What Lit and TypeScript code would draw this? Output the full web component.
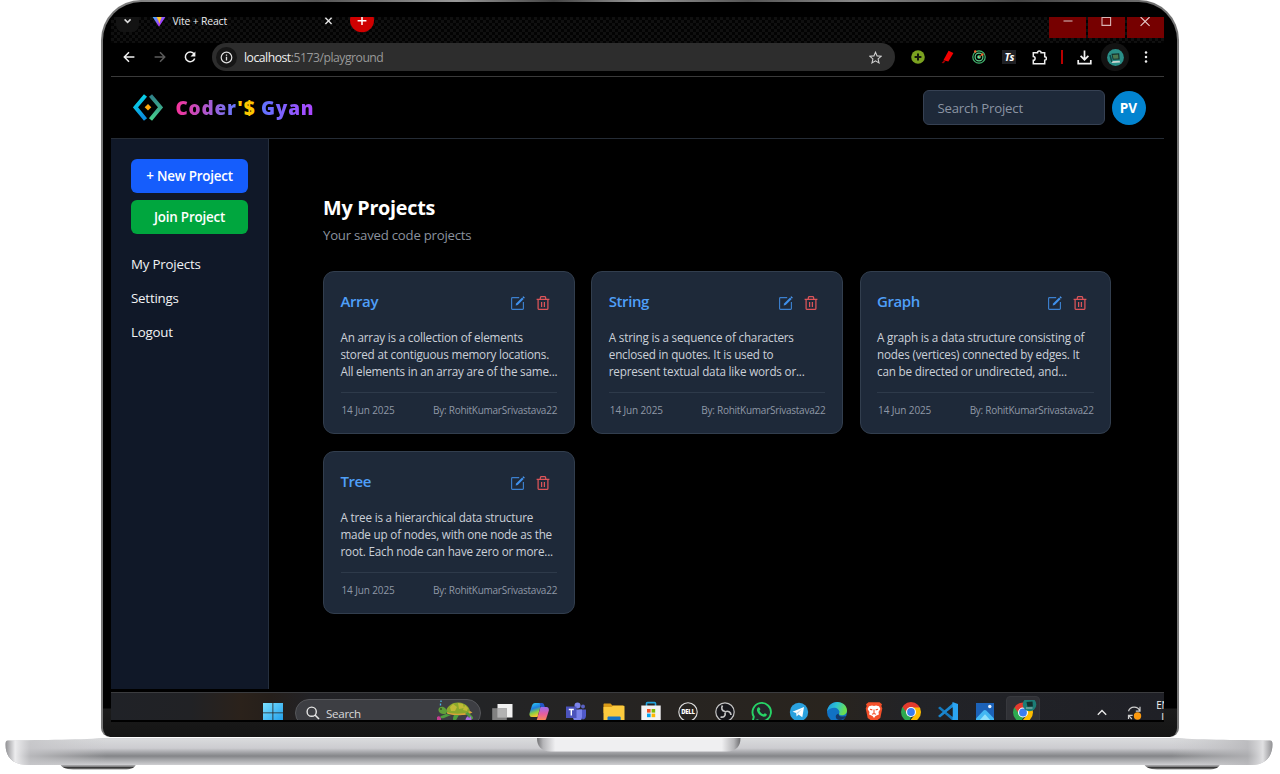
import { LitElement, html, css, svg } from "lit";
import { customElement, property } from "lit/decorators.js";

const icon = (size: number, body: unknown, box = size) =>
  html`<svg width=${size} height=${size} viewBox="0 0 ${box} ${box}" fill="none">${body}</svg>`;

interface Project {
  title: string;
  lines: string[];
  date: string;
  author: string;
}

const PROJECTS: Project[] = [
  { title: "Array", lines: ["An array is a collection of elements", "stored at contiguous memory locations.", "All elements in an array are of the same..."], date: "14 Jun 2025", author: "RohitKumarSrivastava22" },
  { title: "String", lines: ["A string is a sequence of characters", "enclosed in quotes. It is used to", "represent textual data like words or..."], date: "14 Jun 2025", author: "RohitKumarSrivastava22" },
  { title: "Graph", lines: ["A graph is a data structure consisting of", "nodes (vertices) connected by edges. It", "can be directed or undirected, and..."], date: "14 Jun 2025", author: "RohitKumarSrivastava22" },
  { title: "Tree", lines: ["A tree is a hierarchical data structure", "made up of nodes, with one node as the", "root. Each node can have zero or more..."], date: "14 Jun 2025", author: "RohitKumarSrivastava22" },
];

@customElement("project-card")
export class ProjectCard extends LitElement {
  @property({ attribute: false }) project!: Project;

  static styles = css`
    :host {
      display: block;
      box-sizing: border-box;
      height: 163px;
      padding: 16px 16.5px;
      border: 1px solid #323e4e;
      border-radius: 11px;
      background: #1e2939;
    }
    .head { display: flex; justify-content: space-between; height: 27px; }
    h3 { margin: 0; font-size: 15px; line-height: 27px; font-weight: 600; color: #4f9ff8; letter-spacing: -0.42px; }
    .actions { display: flex; gap: 11px; padding: 8px 7px 0 0; }
    .actions svg { display: block; }
    .desc { margin: 14px 0 12px; font-size: 11.7px; line-height: 17px; letter-spacing: -0.2px; color: #cbd0d8; white-space: nowrap; }
    .foot { display: flex; justify-content: space-between; padding-top: 9px; border-top: 1px solid #2e3a4a; font-size: 10px; line-height: 16px; letter-spacing: -0.26px; color: #8f98a6; white-space: nowrap; }
    .date { letter-spacing: -0.12px; padding-left: 1px; }
  `;

  render() {
    const p = this.project;
    return html`
      <div class="head">
        <h3>${p.title}</h3>
        <div class="actions">
          ${icon(14, svg`<path d="M8.2 1.6H1.4a.8.8 0 0 0-.8.8v10.2c0 .4.4.8.8.8h10.2c.4 0 .8-.4.8-.8V6" stroke="#3c80cf" stroke-width="1.15"/><path d="M4.6 9.5l.5-2.1 6-6 1.6 1.6-6 6z" fill="#3f8fea"/><path d="M11.5 1l.8-.7 1.5 1.5-.8.8z" fill="#51a2ff"/>`)}
          ${icon(14, svg`<g stroke="#dc5459" stroke-width="1.25"><path d="M.6 3.4h12.8M2.1 3.6v8.8c0 .6.4 1 1 1h7.8c.6 0 1-.4 1-1V3.6M4.3 3.2V1.9c0-.9.5-1.3 1.2-1.3h3c.7 0 1.2.4 1.2 1.3v1.3"/><path d="M5.6 6v5M8.4 6v5"/></g>`)}
        </div>
      </div>
      <div class="desc">${p.lines.map((l) => html`<div>${l}</div>`)}</div>
      <div class="foot"><span class="date">${p.date}</span><span>By: ${p.author}</span></div>
    `;
  }
}

@customElement("browser-chrome")
export class BrowserChrome extends LitElement {
  static styles = css`
    :host { display: block; color: #e8eaed; }
    svg { display: block; }
    .tabs {
      display: flex;
      height: 26px;
      overflow: hidden;
      background: repeating-conic-gradient(#101010 0 25%, #030303 0 50%) 0 0 / 6px 6px;
    }
    .chev { width: 23px; height: 15px; margin-left: 5px; border-radius: 0 0 7px 7px; background: #131313; }
    .vite { margin-left: 13px; }
    .title { width: 149px; margin-left: 6.5px; font-size: 10.4px; line-height: 9px; letter-spacing: -0.16px; white-space: nowrap; }
    .close { padding-top: 0; }
    .plus { margin-left: 14px; }
    .win { display: flex; gap: 1.5px; margin-left: auto; }
    .win span { width: 37.5px; height: 20.5px; background: #760000; }
    .bar { display: flex; align-items: center; height: 28px; padding: 0 0 5px 3px; border-bottom: 1px solid #3a3a3a; background: #000; }
    .slot { display: flex; justify-content: center; align-items: center; width: 30.5px; flex: none; }
    .slot.thin { width: 14px; }
    .slot.last { width: 30px; }
    .slot.me { width: 31px; }
    .me span { display: flex; align-items: center; justify-content: center; width: 28px; height: 28px; border-radius: 50%; background: #131313; }
    .url { display: flex; align-items: center; flex: none; box-sizing: border-box; width: 683px; height: 28px; margin: 0 7.5px 0 6.5px; padding: 0 13px 0 4px; border-radius: 14px; background: #2d2d2d; }
    .info { display: flex; align-items: center; justify-content: center; width: 21px; height: 21px; margin-right: 7px; border-radius: 50%; background: #161616; }
    .addr { flex: 1; font-size: 12.2px; letter-spacing: -0.48px; color: #999; white-space: nowrap; }
    .addr b { font-weight: 400; color: #f0f0f0; }
    .ts { font: italic 700 10.5px "Open Sans", sans-serif; width: 14px; height: 14px; line-height: 14px; text-align: center; color: #fff; background: #1f2024; letter-spacing: -0.5px; }
  `;

  render() {
    return html`
      <div class="tabs">
        <div class="chev">${icon(23, svg`<path d="M8.6 2.4l3 3 3-3" stroke="#ddd" stroke-width="1.5"/>`)}</div>
        <div class="vite">${icon(14, svg`<defs><linearGradient id="v" x1="0" y1="0" x2="1" y2="1"><stop stop-color="#41b6ff"/><stop offset=".6" stop-color="#a33cff"/><stop offset="1" stop-color="#bd34fe"/></linearGradient></defs><path d="M.6 0h12.8L7 9.8z" fill="url(#v)"/><path d="M4.6 0h5L7.2 7 6.6 4z" fill="#ffc62b"/>`)}</div>
        <div class="title">Vite + React</div>
        <div class="close">${icon(14, svg`<path d="M3.4.8l6.2 6.2M9.6.8L3.4 7" stroke="#e3e3e3" stroke-width="1.4"/>`)}</div>
        <div class="plus">${icon(24, svg`<circle cx="12" cy="3.2" r="12" fill="#cf0000"/><path d="M12-.8v8.8M7.6 3.8h8.8" stroke="#fff" stroke-width="1.5"/>`)}</div>
        <div class="win">
          <span>${icon(37, svg`<path d="M14.5 4h9" stroke="#d9c4c4" stroke-width="1"/>`)}</span>
          <span>${icon(37, svg`<path d="M14 .4h8.6v8H14z" stroke="#d9b4b4" stroke-width="1.1"/>`)}</span>
          <span>${icon(36, svg`<path d="M13.6 0l9 8.8M22.6 0l-9 8.8" stroke="#e6cccc" stroke-width="1.1"/>`)}</span>
        </div>
      </div>
      <div class="bar">
        <div class="slot">${icon(12, svg`<path d="M11.4 6H1.6M6 1.2L1.3 6 6 10.8" stroke="#f1f1f1" stroke-width="1.5"/>`)}</div>
        <div class="slot">${icon(12, svg`<path d="M.6 6h9.8M6 1.2L10.7 6 6 10.8" stroke="#5c5c5c" stroke-width="1.5"/>`)}</div>
        <div class="slot">${icon(12, svg`<path d="M10.2 3.2A4.8 4.8 0 1 0 10.7 7.4" stroke="#f1f1f1" stroke-width="1.5"/><path d="M11.4.4v5H6.5z" fill="#f1f1f1"/>`)}</div>
        <div class="url">
          <div class="info">${icon(13, svg`<circle cx="6.5" cy="6.5" r="5.3" stroke="#e0e0e0" stroke-width="1.2"/><path d="M6.5 5.8v3.6M6.5 3.4v1.3" stroke="#e0e0e0" stroke-width="1.3"/>`)}</div>
          <div class="addr"><b>localhost</b>:5173/playground</div>
          ${icon(13, svg`<path d="M6.5 1.2l1.6 3.7 4 .4-3 2.6.9 4-3.5-2.1L3 11.900l.9-4-3-2.600 4-.4z" stroke="#d0d0d0" stroke-width="1.1"/>`)}
        </div>
        <div class="slot">${icon(14, svg`<circle cx="7" cy="7" r="6.8" fill="#7ba220"/><path d="M7 3.6v6.800M3.600 7h6.800" stroke="#14190a" stroke-width="2"/>`)}</div>
        <div class="slot">${icon(14, svg`<path d="M7.600.8l4.800 2.200-5 8.400-5-1.200z" fill="#f40000"/><path d="M2.800 10.600l1.600.900-2 1.800-1.800-.400z" fill="#a30000"/>`)}</div>
        <div class="slot">${icon(14, svg`<circle cx="7" cy="7" r="6.200" stroke="#41b26d" stroke-width="1.200"/><circle cx="7" cy="7" r="3.900" stroke="#5bd28b" stroke-width="1.200"/><circle cx="7" cy="7" r="1.800" fill="#5fe398"/><path d="M7 7l3.500-2.500" stroke="#e6552d"/><circle cx="3.200" cy="1.500" r="1.200" fill="#f2602b"/><circle cx="10.400" cy="4.400" r="1.200" fill="#f2602b"/>`)}</div>
        <div class="slot"><div class="ts">Ts</div></div>
        <div class="slot">${icon(15, svg`<path d="M1.300 2.800h4.200a1.800 1.800 0 0 1 3.600 0h3.600v4a1.700 1.700 0 0 1 0 3.400v3.600H1.300v-3.600a1.800 1.800 0 0 0 0-3.600z" stroke="#eee" stroke-width="1.500"/>`)}</div>
        <div class="slot thin">${icon(14, svg`<path d="M7 0v14" stroke="#b90000" stroke-width="2"/>`)}</div>
        <div class="slot">${icon(15, svg`<path d="M7.500.5v9M3.600 5.800l3.900 3.900 3.900-3.900M1.200 10v3.600h12.600V10" stroke="#f1f1f1" stroke-width="1.700"/>`)}</div>
        <div class="slot me"><span>${icon(17, svg`<circle cx="8.500" cy="8.500" r="8.400" fill="#2a8f88"/><path d="M4.400 4.800l7.800-.6.5 6.200-7 .4z" fill="#15302d"/><path d="M5.600 5.900l5.500-.4.400 3.900-5 .3z" fill="#4b7a51"/><path d="M3.500 12.300l9-.5.8 1.700-8 .5z" fill="#c9d6d2"/><path d="M3 6l1.800 7" stroke="#0e4543" stroke-width="1.500"/>`)}</span></div>
        <div class="slot last">${icon(14, svg`<g fill="#eee"><circle cx="7" cy="2.500" r="1.250"/><circle cx="7" cy="7" r="1.250"/><circle cx="7" cy="11.500" r="1.250"/></g>`)}</div>
      </div>
    `;
  }
}

@customElement("task-bar")
export class TaskBar extends LitElement {
  static styles = css`
    :host {
      display: flex;
      box-sizing: border-box;
      height: 28px;
      overflow: hidden;
      border-top: 1px solid #3b3c3f;
      background: linear-gradient(90deg, #202227 0, #212225 80px, #2b221b 130px, #251f1b 160px, #222226 200px, #232426 370px, #272421 560px, #29241e 720px, #222327 800px, #1f2026 100%);
    }
    svg { display: block; }
    .start { margin: 10px 0 0 152px; }
    .search { display: flex; box-sizing: border-box; width: 186px; height: 28px; flex: none; margin: 6px 2.400px 0 12px; padding: 0 5px 0 10px; border: 1px solid #56575b; border-radius: 14px; background: #3d3e43; }
    .search .glass { margin-top: 6px; }
    .search .label { flex: 1; margin-left: 6px; font-size: 11.600px; line-height: 27px; letter-spacing: -0.300px; color: #d8d8da; }
    .slot { display: flex; justify-content: center; width: 37.200px; height: 40px; padding-top: 8px; box-sizing: border-box; flex: none; }
    .active { width: 34px; margin: 3px 1.600px 0; padding-top: 3px; border-radius: 4px; background: #303136; border: 1px solid #37383d; }
    .tray { display: flex; margin-left: 55px; }
    .tray .up { margin-top: 14px; }
    .tray .sync { margin: 12px 0 0 18px; }
    .lang { margin: 6px 0 0 13px; font-size: 10px; line-height: 13px; letter-spacing: -0.300px; color: #f0f0f0; white-space: nowrap; }
    .lang div { padding-left: 5px; line-height: 11px; }
  `;

  private chrome(id: string) {
    return svg`<defs><clipPath id=${id}><circle cx="11" cy="11" r="10"/></clipPath></defs><g clip-path="url(#${id})"><path d="M0 0h22v7.500H11L6 13 1 4z" fill="#e33b2e"/><path d="M0 3l2.200 2.500L8 13.500l3.500 2.300L8 22H0z" fill="#2da94f"/><path d="M11 6.500h11V22H8l7-8.500z" fill="#fdbd00"/></g><circle cx="11" cy="11" r="5" fill="#fff"/><circle cx="11" cy="11" r="3.900" fill="#3a7df0"/>`;
  }

  render() {
    const apps = [
      svg`<path d="M6.500 3h15v13.500h-15z" fill="#f1f1f1"/><path d="M1.200 7.200h14.600V19H1.200z" fill="#8c8c8c" opacity=".9"/><path d="M6.500 7.200h9.300v9.300H6.500z" fill="#b2b2b2"/>`,
      svg`<defs><linearGradient id="c1" x1="0" y1="0" x2=".3" y2="1"><stop stop-color="#2fd3f5"/><stop offset=".45" stop-color="#1f7fe0"/><stop offset=".75" stop-color="#8ccf3f"/><stop offset="1" stop-color="#f4c430"/></linearGradient><linearGradient id="c2" x1="0" y1="0" x2="0" y2="1"><stop stop-color="#9a6cf0"/><stop offset=".5" stop-color="#e75d9d"/><stop offset="1" stop-color="#fb8e4c"/></linearGradient></defs><path d="M7 2h6.500L9.500 16H3.800C1.800 16 1 14 1.600 12L4 4.500C4.500 3 5.500 2 7 2z" fill="url(#c1)"/><path d="M12.500 6h6c2 0 2.800 2 2.200 4l-2.400 7.500C17.800 19 17 20 15 20H8.500z" fill="url(#c2)"/><path d="M11.500 2h2.500c1.200 0 1.800.800 2.200 2l.600 2H13z" fill="#2456c9"/>`,
      svg`<circle cx="18" cy="5.500" r="2" fill="#5a62c3"/><circle cx="12.500" cy="4.500" r="3" fill="#7b83eb"/><path d="M14 8.500h7v6c0 2.500-1.500 4-3.500 4z" fill="#5059c9"/><path d="M8 8.500h9V16c0 3-2 4.500-4.500 4.500S8 19 8 16z" fill="#7b83eb"/><path d="M1 5.500h10.500V17H1z" fill="#4b53bc"/><path d="M3.800 8.500h5M6.300 8.500v6" stroke="#fff" stroke-width="1.400"/>`,
      svg`<path d="M.500 3.500c0-.6.500-1 1-1h6l2 2h10c.6 0 1 .4 1 1V12H.500z" fill="#d99a17"/><path d="M.500 6h8l1.500-1.300h11c.300 0 .500.300.500.700V20H.500z" fill="#fccb3e"/><path d="M4.500 20v-3.200c0-.8.500-1.300 1.300-1.300h10.600c.8 0 1.300.5 1.300 1.300V20z" fill="#1773c4"/>`,
      svg`<path d="M6.500 5V2.600c0-.6.400-1 1-1h7c.6 0 1 .4 1 1V5" stroke="#22a5df" stroke-width="1.600"/><path d="M1.300 4.500h19.400V20H1.300z" fill="#f3f3f3"/><path d="M7 8h3.600v3.600H7z" fill="#f25022"/><path d="M11.600 8h3.600v3.600h-3.600z" fill="#7fba00"/><path d="M7 12.600h3.600v3.600H7z" fill="#00a4ef"/><path d="M11.600 12.600h3.600v3.600h-3.600z" fill="#ffb900"/>`,
      svg`<circle cx="11" cy="11" r="9.200" stroke="#dedede" stroke-width="1.100"/><text x="11" y="13.300" text-anchor="middle" font-family="Open Sans, sans-serif" font-weight="800" font-size="6" letter-spacing="-.3" fill="#fff">DELL</text>`,
      svg`<circle cx="11" cy="11" r="9.200" fill="#17171b" stroke="#c4c4c4" stroke-width="1.200"/><g stroke="#c4c4c4" stroke-width="1.700"><path d="M11 10.500c-3-.5-4.200-3.300-2.500-6"/><path d="M11 11c3-1.700 5.800-.2 6 3"/><path d="M11 11.500c1 3.500-1.500 5.200-4.500 4.500"/></g>`,
      svg`<path d="M1.500 20.800l1.300-5A9.200 9.200 0 1 1 6.500 19.300z" fill="#24262a" stroke="#27d366" stroke-width="1.900"/><path d="M7 6.500c1-.8 1.700-.2 2.300 1.600.2.700-.9 1.300-.7 1.800.8 1.600 2 2.700 3.600 3.400.600.200 1.200-1.300 1.800-1 2 .9 2 1.200 1.500 2.300-.6 1-2 1.400-3 1.100-3.500-1-5.700-3.200-6.500-6-.3-1.200 0-2.400 1-3.200z" fill="#27d366"/>`,
      svg`<circle cx="11" cy="11" r="9.200" fill="#2aa1de"/><path d="M4.500 10.800l11.500-4.700-1.700 10.200-3.800-2.700-1.900 1.800-.4-3.300z" fill="#fff"/><path d="M8.200 12.100l6-4.300-4.400 5z" fill="#b6d9ee"/>`,
      svg`<defs><linearGradient id="e" x1="0" y1="0" x2="1" y2=".3"><stop stop-color="#1c8fe0"/><stop offset=".5" stop-color="#2cc3d2"/><stop offset="1" stop-color="#6be04e"/></linearGradient></defs><circle cx="11" cy="11" r="10" fill="#1172c4"/><path d="M1 10.500C1.800 4.500 6 1 11.200 1 17 1 21 5 21 9.500c0 3-2.200 4.800-5 4.800-2 0-3.400-.7-3-1.500.8-1.300.6-3.200-1-4.600C8.800 5.600 3.500 7 1 10.500z" fill="url(#e)"/><path d="M12.800 12.500c-.7 1.500 1 3.100 3.500 3.100 1.700 0 3.200-.5 4.200-1.100-2 4-6 5.500-9 4-2.700-1.500-2.200-5.500 1.300-6z" fill="#15396a"/>`,
      svg`<path d="M5.500 1.200h11l2.500 2-.7 1.800 1 2.500-2 9.500L11 21.500 4.700 17l-2-9.500 1-2.500L3 3.200z" fill="#f4502a"/><path d="M6 5.300l3-.8 2 .5 2-.5 3 .8 1.400 2.700-1.900 3 .4 2.500-3.400 1.600L11 17l-1.500-1.900-3.400-1.600.4-2.500L4.600 8z" fill="#fff"/><path d="M7 8.300l2.300.600M15 8.300l-2.300.600M11 8.500v4M9 13.300l2-.8 2 .8" stroke="#f4502a" stroke-width="1.100"/>`,
      this.chrome("k1"),
      svg`<path d="M1 7l2-1.500 13 10.800V20z" fill="#1579bd"/><path d="M1 15l2 1.500L16 6V2z" fill="#1b87cf"/><path d="M15.500 1l5.500 2v16l-5.500 2.500z" fill="#2ba5f2"/><path d="M15.500 6.500v9L9.800 11z" fill="#202124"/>`,
      svg`<path d="M2 2h18v18H2z" fill="#1c62b8"/><path d="M2 20v-2.500l7.300-7.800c1-1 2.200-1 3.200 0L20 17.500V20z" fill="#43b7f3"/><path d="M5 20l6-6.800 6 6.800z" fill="#8fe0fb"/><circle cx="15.800" cy="5.500" r="1.700" fill="#e9f4ff"/>`,
    ];
    return html`
      <div class="start">${icon(20, svg`<defs><linearGradient id="w" x1="0" y1="0" x2="1" y2="1"><stop stop-color="#7be0ff"/><stop offset="1" stop-color="#1c9be8"/></linearGradient></defs><path d="M0 0h9.500v9.500H0zM10.300 0H20v9.500h-9.700zM0 10.300h9.500V20H0zM10.300 10.300H20V20h-9.700z" fill="url(#w)"/>`)}</div>
      <div class="search">
        <div class="glass">${icon(14, svg`<circle cx="5.700" cy="5.700" r="4.600" stroke="#e6e6e6" stroke-width="1.400"/><path d="M9 9l4 4" stroke="#e6e6e6" stroke-width="1.600"/>`)}</div>
        <div class="label">Search</div>
        <svg width="38" height="24" viewBox="0 0 38 24" fill="none">
          <path d="M9 11C11 5 16 2 22 2.500c6 .5 10 4 11 8.500 1 2-8 3.500-13 3.500S9 13 9 11z" fill="#8aa82c"/>
          <path d="M13 7l3-3 4 3-2 4h-4zM21 3l5 1 1 4-5 1zM28 5l3 3-1 3-4-1z" fill="#c0b936"/>
          <path d="M10 12c4 2 16 3 23-1l2.500 1.500c-5 3-19 4-25.500 1z" fill="#d9a33a"/>
          <path d="M1.500 9c1-2.500 5-3 7-.5l2 3-2 2.500C5 14.500 1 13 1.500 9z" fill="#5f9f3a"/><circle cx="4" cy="9" r=".8" fill="#18240d"/>
          <path d="M9 14l-5 2c-2 1 0 3 3 2l7-3zM17 15c-1 3-2 5 1 7l4-7zM28 13l6 6c2 1 3-1 1-3l-4-4z" fill="#4f9d3e"/>
          <path d="M4 .5v1.500M3.500 3.500v2" stroke="#4ab8e8" stroke-width="1.300"/>
          <path d="M29 18l2-2 1 2 2-2 .5 4h-6z" fill="#a86be0"/><path d="M0 17l2-1 2 2v3H0z" fill="#c23c90"/>
        </svg>
      </div>
      ${apps.map((a) => html`<div class="slot">${icon(22, a)}</div>`)}
      <div class="slot active">
        ${icon(30, svg`<g transform="translate(4 1.500)">${this.chrome("k2")}</g><circle cx="21.500" cy="4.500" r="6.800" fill="#1c7d76"/><path d="M18.500 2l6-.5.4 5-5.400.3z" fill="#12302d"/><path d="M18 8h6.500" stroke="#a5b9b5" stroke-width="1"/>`)}
      </div>
      <div class="tray">
        <div class="up">${icon(12, svg`<path d="M1.800 7.800L6 3.600l4.200 4.200" stroke="#e9e9e9" stroke-width="1.400"/>`)}</div>
        <div class="sync">${icon(17, svg`<g stroke="#cfcfcf" stroke-width="1.200"><path d="M2.500 6.200a6 6 0 0 1 11.200-.4M14 1.800v4.300H9.800"/><path d="M2.500 14v-3.600h4.200M2.800 10.600l3 3.400"/></g><circle cx="11.500" cy="11" r="3.700" fill="#fb990f"/>`)}</div>
        <div class="lang">ENG<div>IN</div></div>
      </div>
    `;
  }
}

@customElement("app-root")
export class AppRoot extends LitElement {
  static styles = css`
    :host { display: block; width: 1280px; height: 774px; overflow: hidden; background: #fff; font-family: "Open Sans", "Noto Sans", sans-serif; }
    svg { display: block; }
    .lid {
      box-sizing: border-box;
      width: 1078px;
      height: 737px;
      margin: 0 0 0 101px;
      padding: 15px 13px 0 8px;
      border: 2.500px solid transparent;
      border-bottom: 0;
      border-radius: 40px 40px 9px 9px;
      background:
        linear-gradient(#000 0 706px, #1b1b1b 707px, #141414 736px) padding-box,
        linear-gradient(90deg, #777 0, #888 6%, #555 20%, #999 33%, #444 42%, #999 50%, #555 60%, #888 70%, #444 85%, #777 100%) border-box;
    }
    .screen { height: 705px; overflow: hidden; background: #000; }
    header { display: flex; align-items: center; height: 61px; padding: 0 18.500px 0 22px; border-bottom: 1px solid #252c36; box-sizing: content-box; }
    .brand { margin-left: 12.500px; font: 900 19px/28px "Noto Sans", sans-serif; letter-spacing: 0.750px; white-space: nowrap; }
    .brand span { -webkit-background-clip: text; background-clip: text; color: transparent; }
    .coder { background-image: linear-gradient(90deg, #f6339a, #637bff); }
    .brand .cash { color: #fdc700; }
    .gyan { background-image: linear-gradient(90deg, #5f74ff, #ad46ff); }
    .find { box-sizing: border-box; width: 181.500px; height: 35.500px; margin: 0 7px 0 auto; padding: 0 13.500px; border: 1px solid #364153; border-radius: 6px; background: #1e2939; font-size: 13.200px; line-height: 34px; letter-spacing: -0.200px; color: #8b94a3; }
    .pv { width: 34px; height: 34px; border-radius: 50%; background: #0284d0; text-align: center; font-size: 13.600px; line-height: 34px; font-weight: 700; color: #fff; }
    .body { display: flex; height: 550px; }
    aside { box-sizing: border-box; width: 158px; padding: 20px 20px 0; border-right: 1px solid #252f3e; background: #101828; color: #f1f3f5; }
    .btn { height: 34px; margin-bottom: 6.500px; border-radius: 6px; text-align: center; font-size: 13.400px; line-height: 34px; font-weight: 600; letter-spacing: -0.200px; color: #fff; }
    .blue { background: #155dfc; }
    .green { background: #00a63e; }
    nav { display: grid; gap: 14px; margin-top: 20px; font-size: 13.300px; line-height: 20px; letter-spacing: -0.200px; }
    main { flex: 1; padding: 54px 52px 0 54px; }
    h1 { margin: 0; font-size: 19.800px; line-height: 30px; font-weight: 700; letter-spacing: -0.270px; color: #fff; }
    .sub { margin: 2px 0 26px; font-size: 13.200px; line-height: 20px; letter-spacing: -0.230px; color: #8b929e; }
    .grid { display: grid; grid-template-columns: repeat(3, 251.600px); gap: 16.700px; }
    task-bar { margin-top: 3px; }
  `;

  render() {
    return html`
      <div class="lid">
        <div class="screen">
          <browser-chrome></browser-chrome>
          <header>
            <svg width="30" height="28" viewBox="0 0 30 28" fill="none">
              <defs>
                <linearGradient id="l" x1="0" y1="0" x2="0.300" y2="1"><stop stop-color="#08e4ea"/><stop offset="1" stop-color="#0a8fe0"/></linearGradient>
                <linearGradient id="r" x1="0" y1="0" x2="0" y2="1"><stop stop-color="#2f7f88"/><stop offset="1" stop-color="#46cf8d"/></linearGradient>
              </defs>
              <path d="M12.500 1.500L2.500 13.300 12.500 25.500" stroke="url(#l)" stroke-width="4"/>
              <path d="M17.500 1.500l10 11.800-10 12.200" stroke="url(#r)" stroke-width="4"/>
              <path d="M15 10l3.300 3.300-3.300 3.300-3.300-3.300z" fill="#ffa70b"/>
            </svg>
            <div class="brand"><span class="coder">Coder</span><span class="cash">'$</span> <span class="gyan">Gyan</span></div>
            <div class="find">Search Project</div>
            <div class="pv">PV</div>
          </header>
          <div class="body">
            <aside>
              <div class="btn blue">+ New Project</div>
              <div class="btn green">Join Project</div>
              <nav><div>My Projects</div><div>Settings</div><div>Logout</div></nav>
            </aside>
            <main>
              <h1>My Projects</h1>
              <div class="sub">Your saved code projects</div>
              <div class="grid">${PROJECTS.map((p) => html`<project-card .project=${p}></project-card>`)}</div>
            </main>
          </div>
          <task-bar></task-bar>
        </div>
      </div>
      <svg width="1280" height="37" viewBox="0 0 1280 37" fill="none">
        <defs>
          <linearGradient id="m" x1="0" y1="0" x2="0" y2="28" gradientUnits="userSpaceOnUse"><stop stop-color="#b5b5b8"/><stop offset=".06" stop-color="#d9dadc"/><stop offset=".4" stop-color="#ccccd0"/><stop offset=".58" stop-color="#9c9da0"/><stop offset=".68" stop-color="#848588"/><stop offset=".8" stop-color="#a2a3a6"/><stop offset="1" stop-color="#cfcfd2"/></linearGradient>
          <linearGradient id="ends" x1="5" y1="0" x2="1273" y2="0" gradientUnits="userSpaceOnUse"><stop stop-color="#8d8d90"/><stop offset=".008" stop-color="#ececee"/><stop offset=".02" stop-color="#c4c4c7" stop-opacity=".8"/><stop offset=".08" stop-color="#c8c8ca" stop-opacity="0"/><stop offset=".92" stop-color="#c8c8ca" stop-opacity="0"/><stop offset=".98" stop-color="#b6b6b9" stop-opacity=".8"/><stop offset=".992" stop-color="#e0e0e2"/><stop offset="1" stop-color="#8d8d90"/></linearGradient>
          <linearGradient id="n" x1="537" y1="0" x2="740" y2="0" gradientUnits="userSpaceOnUse"><stop stop-color="#727275"/><stop offset=".03" stop-color="#b5b5b8"/><stop offset=".09" stop-color="#efeff1"/><stop offset=".91" stop-color="#efeff1"/><stop offset=".97" stop-color="#b5b5b8"/><stop offset="1" stop-color="#727275"/></linearGradient>
          <linearGradient id="foot" x1="0" y1="27" x2="0" y2="33" gradientUnits="userSpaceOnUse"><stop stop-color="#c6c6c8"/><stop offset=".4" stop-color="#8a8a8c"/><stop offset=".6" stop-color="#333"/><stop offset="1" stop-color="#b0b0b0"/></linearGradient>
        </defs>
        <path id="base" d="M60 27h76c-1 4-5 5.500-12 5.500H76c-8 0-14-1-16-5.500zM1144 27h76c-1 4-5 5.500-12 5.500h-48c-8 0-14-1-16-5.500z" fill="url(#foot)"/>
        <path d="M8 3.500C30 3 80 3 102 1h1076c20 2 70 2 92 2.500 2 0 2.500 1.500 2.500 4C1272.500 18 1266 28 1252 28H28C12 28 5.500 19 5.500 7.500c0-2.500.5-4 2.500-4z" fill="url(#m)"/>
        <path d="M8 3.500C30 3 80 3 102 1h1076c20 2 70 2 92 2.500 2 0 2.500 1.500 2.500 4C1272.500 18 1266 28 1252 28H28C12 28 5.500 19 5.500 7.500c0-2.500.5-4 2.500-4z" fill="url(#ends)"/>
        <path d="M537 1h203.500c0 8-4 13.500-14 13.500H551C541 14.500 537 9 537 1z" fill="url(#n)"/>
      </svg>
    `;
  }
}
